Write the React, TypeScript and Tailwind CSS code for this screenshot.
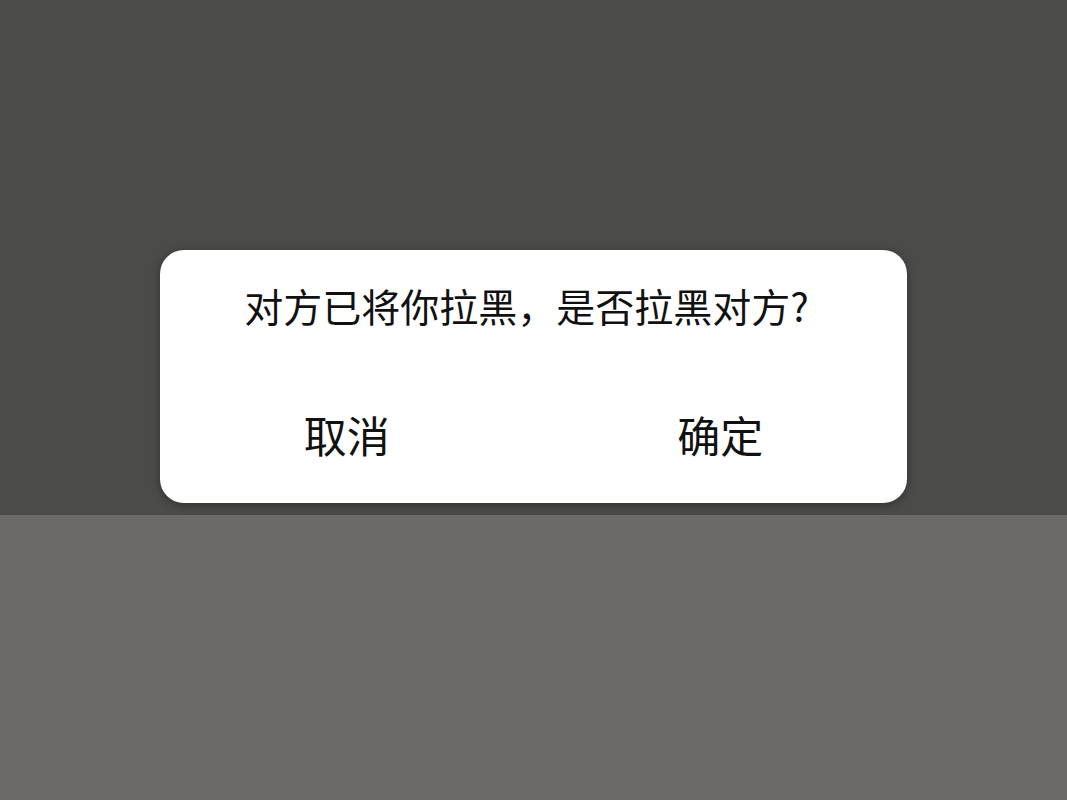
import React from "react";

type ButtonProps = { label: string };

function DialogButton({ label }: ButtonProps) {
  return (
    <button className="flex-1 flex items-center justify-center text-[43px] leading-none text-[#111]">
      {label}
    </button>
  );
}

export default function App() {
  return (
    <div
      className="w-[1067px] h-[800px] flex flex-col overflow-hidden"
      style={{ fontFamily: '"Noto Sans CJK SC", "Noto Sans", sans-serif' }}
    >
      <div className="h-[515px] bg-[#4b4b4a] pt-[250px] pl-[160px]">
        <div className="w-[747px] h-[253px] bg-white rounded-[24px] shadow-[0_2px_10px_rgba(0,0,0,0.35)] flex flex-col">
          <div className="h-[110px] flex items-center justify-center pr-[14px] text-[39px] leading-none text-[#111]">
            对方已将你拉黑，是否拉黑对方?
          </div>
          <div className="flex-1 flex pt-[8px] pb-[2px]">
            <DialogButton label="取消" />
            <DialogButton label="确定" />
          </div>
        </div>
      </div>
      <div className="flex-1 bg-[#6b6a68]" />
    </div>
  );
}
